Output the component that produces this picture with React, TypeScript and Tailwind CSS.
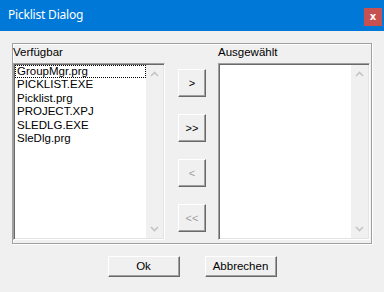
import React from 'react'

const files = ['GroupMgr.prg', 'PICKLIST.EXE', 'Picklist.prg', 'PROJECT.XPJ', 'SLEDLG.EXE', 'SleDlg.prg']

function Chevron({ up }: { up?: boolean }) {
  return (
    <svg width="9" height="6" viewBox="0 0 9 6" className="block">
      <path
        d={up ? 'M1 5 L4.5 1.5 L8 5' : 'M1 1 L4.5 4.5 L8 1'}
        fill="none"
        stroke="#c4c4c4"
        strokeWidth="1.6"
      />
    </svg>
  )
}

function ListBox({ items }: { items: string[] }) {
  return (
    <div className="flex h-[177px] w-[152px] border border-t-[#a0a0a0] border-l-[#a0a0a0] border-r-white border-b-white bg-white shadow-[inset_1px_1px_0_#696969,inset_-1px_-1px_0_#e3e3e3]">
      <div className="flex-1 pt-[1px] pl-[1px]">
        {items.map((f, i) => (
          <div
            key={f}
            className={
              'h-[13.4px] pl-[2px] text-[11.5px] leading-[13.4px] text-black ' +
              (i === 0 ? 'outline outline-1 outline-dotted -outline-offset-1 outline-black' : '')
            }
          >
            {f}
          </div>
        ))}
      </div>
      <div className="my-[1px] mr-[1px] flex w-[17px] flex-col items-center justify-between bg-[#f0f0f0] py-[6px]">
        <Chevron up />
        <Chevron />
      </div>
    </div>
  )
}

function MoveButton({ label, disabled }: { label: string; disabled?: boolean }) {
  return (
    <button
      className={
        'flex h-[28px] w-[28px] items-center justify-center border border-t-white border-l-white border-r-[#696969] border-b-[#696969] bg-[#f0f0f0] text-[11px] shadow-[inset_-1px_-1px_0_#a0a0a0] ' +
        (disabled ? 'text-[#a0a0a0]' : 'text-black')
      }
    >
      {label}
    </button>
  )
}

function DialogButton({ label }: { label: string }) {
  return (
    <button className="h-[21px] w-[72px] border border-t-white border-l-white border-r-[#696969] border-b-[#696969] bg-[#f0f0f0] text-[11.5px] text-black shadow-[inset_-1px_-1px_0_#a0a0a0]">
      {label}
    </button>
  )
}

export default function App() {
  return (
    <div className="flex h-[292px] w-[384px] flex-col bg-[#f0f0f0] font-['Liberation_Sans',Arial,sans-serif]">
      <div className="flex h-[31px] items-start bg-[#0078d7] pl-[8px] pr-[2px]">
        <span className="mt-[7px] font-['Noto_Sans',sans-serif] text-[12px] leading-[16px] tracking-[-0.2px] text-white">
          Picklist Dialog
        </span>
        <div className="ml-auto mt-[8px] flex h-[18px] w-[18px] items-center justify-center bg-[#c75050] font-['DejaVu_Sans',sans-serif] text-[10px] font-bold leading-none text-white">
          x
        </div>
      </div>

      <div className="ml-[12px] mt-[12px] flex h-[201px] w-[360px] border border-[#a0a0a0] shadow-[inset_1px_1px_0_#fff,1px_1px_0_#fff]">
        <div className="flex flex-col">
          <div className="h-[19px] pt-[2px] text-[11.5px] leading-[13px] text-black">Verfügbar</div>
          <ListBox items={files} />
        </div>
        <div className="ml-[13px] flex flex-col gap-[17px] pt-[25px]">
          <MoveButton label=">" />
          <MoveButton label=">>" />
          <MoveButton label="<" disabled />
          <MoveButton label="<<" disabled />
        </div>
        <div className="ml-[12px] flex flex-col">
          <div className="h-[19px] pt-[2px] text-[11.5px] leading-[13px] text-black">Ausgewählt</div>
          <ListBox items={[]} />
        </div>
      </div>

      <div className="mt-[12px] flex justify-center gap-[25px]">
        <DialogButton label="Ok" />
        <DialogButton label="Abbrechen" />
      </div>
    </div>
  )
}
